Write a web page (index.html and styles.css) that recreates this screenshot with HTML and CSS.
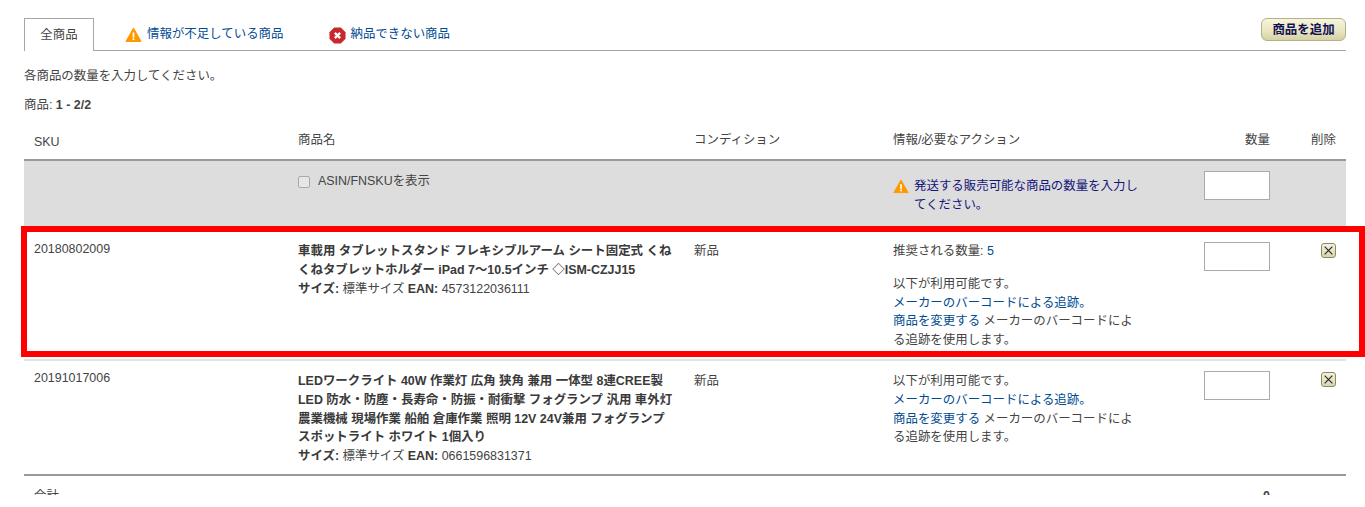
FILE: index.html
```html
<!DOCTYPE html>
<html lang="ja">
<head>
<meta charset="utf-8">
<title>商品</title>
<link rel="stylesheet" href="styles.css">
</head>
<body>
<main class="page">
  <nav class="tabs">
    <a class="tab tab-active">全商品</a>
    <a class="tab tab-warn"><svg class="icon" viewBox="0 0 16 16"><path d="M8 1 L15.6 14.5 H.4 Z" fill="#f90" stroke="#f90" stroke-linejoin="round"/><rect x="7.1" y="5.5" width="1.8" height="5" fill="#fff"/><rect x="7.1" y="11.3" width="1.8" height="1.8" fill="#fff"/></svg>情報が不足している商品</a>
    <a class="tab tab-error"><svg class="icon-stop" viewBox="0 0 18 18"><path d="M5.5 .5 H12.5 L17.5 5.5 V12.5 L12.5 17.5 H5.5 L.5 12.5 V5.5 Z" fill="#c9282d"/><path d="M6.2 6.2 L11.8 11.8 M11.8 6.2 L6.2 11.8" stroke="#fff" stroke-width="2.4"/></svg>納品できない商品</a>
    <button class="add-btn">商品を追加</button>
  </nav>
  <p class="intro">各商品の数量を入力してください。</p>
  <p class="count">商品: <b>1 - 2/2</b></p>
  <div class="row head">
    <div class="sku-head">SKU</div>
    <div>商品名</div>
    <div>コンディション</div>
    <div>情報/必要なアクション</div>
    <div class="qty-head">数量</div>
    <div class="del-head">削除</div>
  </div>
  <div class="row gray">
    <div></div>
    <label class="asin"><span class="check"></span>ASIN/FNSKUを表示</label>
    <div></div>
    <div class="alert"><svg class="icon-small" viewBox="0 0 16 16"><path d="M8 1 L15.6 14.5 H.4 Z" fill="#f90" stroke="#f90" stroke-linejoin="round"/><rect x="7.1" y="5.5" width="1.8" height="5" fill="#fff"/><rect x="7.1" y="11.3" width="1.8" height="1.8" fill="#fff"/></svg><a class="alert-text">発送する販売可能な商品の数量を入力してください。</a></div>
    <div class="qty"><input class="qty-input" type="text"></div>
    <div></div>
  </div>
  <div class="row item item-first">
    <span class="highlight"></span>
    <div class="sku">20180802009</div>
    <div class="name"><b>車載用 タブレットスタンド フレキシブルアーム シート固定式 くねくねタブレットホルダー iPad 7〜10.5インチ ◇ISM-CZJJ15</b><br><b>サイズ:</b> 標準サイズ <b>EAN:</b> 4573122036111</div>
    <div class="cond">新品</div>
    <div class="info">
      <p class="rec">推奨される数量: <a>5</a></p>
      <p>以下が利用可能です。<br><a>メーカーのバーコードによる追跡。</a><br><a>商品を変更する</a> メーカーのバーコードによる追跡を使用します。</p>
    </div>
    <div class="qty"><input class="qty-input" type="text"></div>
    <div class="del"><button class="x-btn"><svg viewBox="0 0 10 10"><path d="M1.5 1.5 L8.5 8.5 M8.5 1.5 L1.5 8.5" stroke="#223" stroke-width="1"/></svg></button></div>
  </div>
  <div class="row item item-second">
    <div class="sku">20191017006</div>
    <div class="name"><b>LEDワークライト 40W 作業灯 広角 狭角 兼用 一体型 8連CREE製 LED 防水・防塵・長寿命・防振・耐衝撃 フォグランプ 汎用 車外灯 農業機械 現場作業 船舶 倉庫作業 照明 12V 24V兼用 フォグランプ スポットライト ホワイト 1個入り</b><br><b>サイズ:</b> 標準サイズ <b>EAN:</b> 0661596831371</div>
    <div class="cond">新品</div>
    <div class="info">
      <p>以下が利用可能です。<br><a>メーカーのバーコードによる追跡。</a><br><a>商品を変更する</a> メーカーのバーコードによる追跡を使用します。</p>
    </div>
    <div class="qty"><input class="qty-input" type="text"></div>
    <div class="del"><button class="x-btn"><svg viewBox="0 0 10 10"><path d="M1.5 1.5 L8.5 8.5 M8.5 1.5 L1.5 8.5" stroke="#223" stroke-width="1"/></svg></button></div>
  </div>
  <div class="row total">
    <div class="total-label">合計</div>
    <div></div><div></div><div></div>
    <div class="total-num">0</div>
    <div></div>
  </div>
</main>
</body>
</html>
```
FILE: styles.css
```css
* { box-sizing: border-box; }
html, body { margin: 0; background: #fff; overflow: hidden; }
body {
  height: 507px;
  font-family: "Liberation Sans", "Noto Sans CJK JP", sans-serif;
  font-size: 12.45px;
  line-height: 18.67px;
  color: #444;
}
p { margin: 0; }
a { color: #004b91; }
.page { padding: 0 19px 0 24px; height: 495px; overflow: hidden; }

.tabs {
  display: flex;
  align-items: flex-start;
  height: 51px;
  padding-top: 18px;
  border-bottom: 1px solid #a6a6a6;
}
.tab { display: flex; align-items: center; height: 33px; color: #004b91; }
.tab-active {
  justify-content: center;
  width: 70px;
  color: #444;
  background: #fff;
  border: 1px solid #a6a6a6;
  border-bottom: 0;
}
.tab-warn { margin-left: 31px; }
.tab-error { margin-left: 46px; }
.icon { width: 17px; height: 16px; margin-right: 5px; flex: none; }
.icon-stop { width: 17px; height: 17px; margin-right: 4px; flex: none; position: relative; top: 1px; }
.add-btn {
  margin-left: auto;
  width: 85px;
  height: 23px;
  font: bold 12.45px/18px "Liberation Sans", "Noto Sans CJK JP", sans-serif;
  color: #111155;
  padding: 1px 0 0;
  border: 1px solid #b5b187;
  border-radius: 6px;
  background: linear-gradient(#f7f5dc, #e9e6c2 55%, #d5d1a4);
}

.intro { margin-top: 16px; }
.count { margin-top: 10px; }

.row {
  display: grid;
  grid-template-columns: 274px 396px 199px 311px 66px 1fr;
}
.head { height: 44px; padding-top: 14px; margin-top: 3px; border-bottom: 2px solid #999; }
.sku-head { padding-left: 10px; padding-top: 2px; }
.qty-head { text-align: right; }
.del-head { text-align: right; padding-right: 10px; }

.gray { height: 65px; background: #ddd; padding-top: 10px; }
.asin { display: flex; align-items: flex-start; padding-top: 1px; }
.check {
  width: 12px; height: 12px; margin: 4px 8px 0 0;
  background: #e6e6e6; border: 1px solid #aaa; border-radius: 2px;
}
.alert { display: flex; padding-top: 6px; width: 247px; }
.icon-small { width: 16px; height: 15px; margin: 2px 5px 0 0; flex: none; }
.alert-text { color: #14147a; }
.qty-input {
  display: block;
  width: 66px;
  height: 29px;
  padding: 0;
  background: #fff;
  border: 1px solid #aaa;
}

.item { position: relative; border-bottom: 2px solid #e4e4e4; }
.item-first { height: 135px; padding-top: 16px; }
.item-second { height: 115px; padding-top: 11px; border-bottom: 2px solid #999; }
.highlight {
  position: absolute;
  left: -3px;
  right: -19px;
  top: 0;
  height: 131px;
  border: 6px solid #f00;
  pointer-events: none;
}
.sku { padding-left: 10px; margin-top: -2px; }
.item-second .sku { margin-top: -3px; }
.item-second .qty, .item-second .del { margin-top: -1px; }
.name { width: 375px; }
.name b { color: #3a3a3a; }
.info { width: 245px; }
.rec { margin-bottom: 14px; }
.del { display: flex; justify-content: flex-end; padding-right: 10px; }
.x-btn {
  display: block;
  width: 15px; height: 15px;
  padding: 1px;
  margin-top: 1px;
  border: 1px solid #8a8a66;
  border-radius: 3px;
  background: linear-gradient(#f4f2da, #d9d6ac);
}
.x-btn svg { display: block; width: 11px; height: 11px; }
.total { padding-top: 11px; }
.total-label { padding-left: 10px; }
.total-num { text-align: right; font-weight: bold; }
```
